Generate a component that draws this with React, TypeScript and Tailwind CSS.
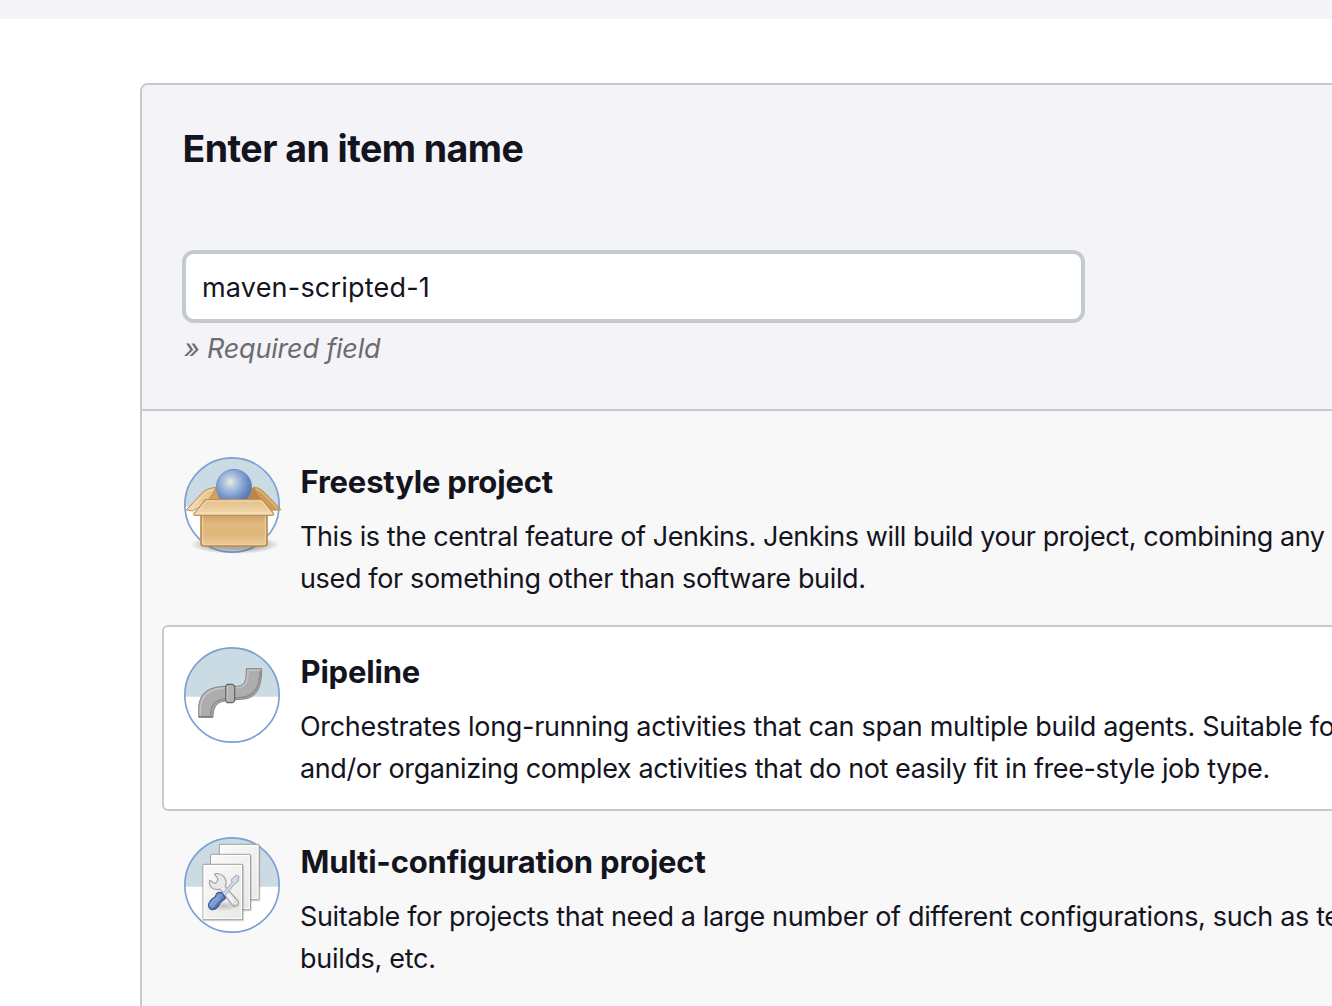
import type { ReactNode } from 'react';

function CircleBase({ children }: { children: ReactNode }) {
  return (
    <svg className="h-24 w-24 shrink-0 overflow-visible" viewBox="24 21 288 288" fill="none" aria-hidden="true">
      <circle cx="168" cy="165" r="141" fill="#fff" />
      <path d="M27 170V165a141 141 0 0 1 282 0v5z" fill="#cbdbe3" />
      <circle cx="168" cy="165" r="141.5" stroke="#7ba1d4" strokeWidth="5" />
      {children}
    </svg>
  );
}

function BoxIcon() {
  return (
    <CircleBase>
      <defs>
        <radialGradient id="ball" cx="0.4" cy="0.36" r="0.62">
          <stop offset="0" stopColor="#eceedd" />
          <stop offset="0.3" stopColor="#b0c4e0" />
          <stop offset="0.65" stopColor="#7c9cd0" />
          <stop offset="1" stopColor="#5577b4" />
        </radialGradient>
        <linearGradient id="front" x1="0" y1="0" x2="0" y2="1">
          <stop offset="0" stopColor="#cda367" />
          <stop offset="0.3" stopColor="#dfb97f" />
          <stop offset="0.6" stopColor="#ddb679" />
          <stop offset="1" stopColor="#ecca98" />
        </linearGradient>
        <linearGradient id="flap" x1="0" y1="0" x2="0" y2="1">
          <stop offset="0" stopColor="#e3bd85" />
          <stop offset="1" stopColor="#f2dab3" />
        </linearGradient>
        <radialGradient id="boxShade">
          <stop offset="0.5" stopColor="#555" stopOpacity="0.5" />
          <stop offset="1" stopColor="#555" stopOpacity="0" />
        </radialGradient>
      </defs>
      <ellipse cx="177" cy="284" rx="134" ry="28" fill="url(#boxShade)" />
      <path d="M112 114 238 113 262 152H88z" fill="#bb8747" />
      <path d="M116 118 126 120 128 149H92z" fill="#d2a25e" />
      <path d="M112 113 119 112 116 124 90 158 50 183 31 180 74 133Q86 117 112 113z" fill="url(#flap)" stroke="#bd9156" strokeWidth="3" strokeLinejoin="round" />
      <path d="M44 175 80 137Q92 122 112 118M86 153 60 174" stroke="#f8e6ca" strokeWidth="3" />
      <path d="M232 111Q252 112 266 128L315 179 289 181 258 153z" fill="#cf9c58" stroke="#bd9156" strokeWidth="3" strokeLinejoin="round" />
      <path d="M240 117Q254 121 262 131L304 175" stroke="#e0ba7f" strokeWidth="4" />
      <circle cx="174" cy="111" r="53" fill="url(#ball)" stroke="#6a8bc2" strokeWidth="2.5" />
      <path d="M75 194h198v86q0 8-8 8H83q-8 0-8-8z" fill="url(#front)" stroke="#b98c52" strokeWidth="5" />
      <path d="M80 200v79q0 4 4 4h180q4 0 4-4v-79" stroke="#efd3a6" strokeWidth="3" />
      <path d="M88 149H259L293 191Q295 196 288 196H58Q50 196 55 190z" fill="url(#flap)" stroke="#bf9154" strokeWidth="3.5" strokeLinejoin="round" />
      <path d="M91 153H256L286 189H61z" stroke="#f5e0be" strokeWidth="3" />
    </CircleBase>
  );
}

function PipeIcon() {
  return (
    <CircleBase>
      <path
        d="M68 232V209C68 163 92 140 148 139H176C204 139 211 131 211 86H257C257 150 238 177 194 178L147 183C122 186 111 201 111 232Z"
        fill="#adadad"
        stroke="#868686"
        strokeWidth="3"
      />
      <path d="M73 229V210C73 167 96 145 149 144H176C207 144 217 129 216 91H253" stroke="#c6c6c6" strokeWidth="4" />
      <path d="M253 93C251 146 232 172 194 173L148 177C116 180 105 194 104 226" stroke="#8e8e8e" strokeWidth="5" />
      <path d="M69 230h41" stroke="#808080" strokeWidth="5" />
      <path d="M154 133h16l6 6v43l-6 6h-16l-5-6v-43z" fill="#b2b2b2" stroke="#626262" strokeWidth="3.5" />
      <path d="M154 138v44" stroke="#c6c6c6" strokeWidth="3" />
    </CircleBase>
  );
}

function Sheet({ x, y }: { x: number; y: number }) {
  return (
    <g>
      <rect x={x + 1} y={y + 3} width="122" height="168" rx="2" fill="#666" opacity="0.25" />
      <rect x={x} y={y} width="119" height="166" rx="2" fill="url(#paper)" stroke="#8f908d" strokeWidth="3" />
      <rect x={x + 3} y={y + 3} width="113" height="160" stroke="#fff" strokeWidth="3" />
    </g>
  );
}

function SheetsIcon() {
  return (
    <CircleBase>
      <defs>
        <linearGradient id="paper" x1="0" y1="0" x2="1" y2="1">
          <stop offset="0" stopColor="#fafafa" />
          <stop offset="0.4" stopColor="#f3f3f2" />
          <stop offset="1" stopColor="#e8e8e7" />
        </linearGradient>
        <linearGradient id="handle" x1="0" y1="0" x2="1" y2="1">
          <stop offset="0" stopColor="#5579b7" />
          <stop offset="0.45" stopColor="#7f9fd4" />
          <stop offset="0.65" stopColor="#456cab" />
          <stop offset="1" stopColor="#31558f" />
        </linearGradient>
        <radialGradient id="toolShade">
          <stop offset="0" stopColor="#555" stopOpacity="0.3" />
          <stop offset="1" stopColor="#555" stopOpacity="0" />
        </radialGradient>
      </defs>
      <Sheet x={130} y={43} />
      <Sheet x={104} y={73} />
      <Sheet x={81} y={103} />
      <ellipse cx="141" cy="228" rx="55" ry="16" fill="url(#toolShade)" />
      <path
        d="M116 134 123 142Q129 150 120 158Q113 162 107 154L101 151C97 169 111 183 132 177L167 223C176 236 193 225 186 213L148 170C157 147 138 128 118 131Z"
        fill="#e8e9e8"
        stroke="#a0a2a0"
        strokeWidth="3.5"
        strokeLinejoin="round"
      />
      <path d="M138 174 176 220" stroke="#fafafa" strokeWidth="4" />
      <circle cx="177" cy="220" r="4" fill="#fff" stroke="#aaa" strokeWidth="2" />
      <path d="M139 191 168 158 165 149 180 136 189 139 186 155 174 164 146 198z" fill="#cfd7e3" stroke="#9facbf" strokeWidth="3" strokeLinejoin="round" />
      <path d="M172 153 182 142" stroke="#e0e6ef" strokeWidth="3" />
      <path
        d="M127 187 136 188 148 202Q149 207 139 212Q131 217 128 227Q119 240 107 239Q96 234 98 222Q104 207 118 200Q120 190 127 187Z"
        fill="url(#handle)"
        stroke="#36598f"
        strokeWidth="3.5"
      />
      <path d="M103 224Q109 210 125 202M112 230Q118 216 132 207" stroke="#9db9e2" strokeWidth="2.5" strokeLinecap="round" />
    </CircleBase>
  );
}

interface ItemProps {
  icon: ReactNode;
  title: string;
  children: ReactNode;
  selected?: boolean;
}

function Item({ icon, title, children, selected }: ItemProps) {
  return (
    <li
      className={
        selected
          ? 'flex h-[186px] rounded-md border-2 border-[#c4cbcf] bg-white p-5'
          : 'flex h-[186px] rounded-md border-2 border-transparent p-5'
      }
    >
      {icon}
      <div className="ml-5 whitespace-nowrap">
        <h2 className="mt-0.5 pl-[0.5px] text-[31px] leading-[46px] font-bold tracking-[-0.19px]">{title}</h2>
        <div className="mt-[11px] text-[27px] leading-[42px]">{children}</div>
      </div>
    </li>
  );
}

export default function App() {
  return (
    <div className="h-[1006px] overflow-hidden bg-white font-['Inter',sans-serif] text-[#14141f]">
      <div className="h-[19px] bg-[#f5f5f8]" />
      <main className="mt-16 ml-[140px] h-[1000px] w-[1300px] rounded-tl-lg border-2 border-[#c4cbcf] bg-[#f8f8f8]">
        <section className="h-[326px] rounded-tl-md border-b-2 border-[#c4cbcf] bg-[#f3f3f8] px-10 pt-10">
          <h1 className="pl-[0.5px] text-[37.5px] leading-[48px] font-bold tracking-[-0.55px]">Enter an item name</h1>
          <div className="mt-[77px] flex h-[73px] w-[903px] items-center rounded-xl border-4 border-[#c4cbcf] bg-white px-4 pt-[3px] text-[27px] tracking-[0.2px]">
            maven-scripted-1
          </div>
          <p className="mt-[5px] pl-0.5 text-[27px] leading-[42px] tracking-[-0.2px] text-[#6c6c6c] italic">» Required field</p>
        </section>
        <ul className="flex flex-col gap-1 pt-6 pl-5">
          <Item icon={<BoxIcon />} title="Freestyle project">
            <p className="tracking-[-0.42px]">
              This is the central feature of Jenkins. Jenkins will build your project, combining any
            </p>
            <p className="tracking-[-0.35px]">used for something other than software build.</p>
          </Item>
          <Item selected icon={<PipeIcon />} title="Pipeline">
            <p className="tracking-[-0.31px]">
              Orchestrates long-running activities that can span multiple build agents. Suitable for
            </p>
            <p className="tracking-[-0.4px]">
              and/or organizing complex activities that do not easily fit in free-style job type.
            </p>
          </Item>
          <Item icon={<SheetsIcon />} title="Multi-configuration project">
            <p className="tracking-[-0.35px]">
              Suitable for projects that need a large number of different configurations, such as te
            </p>
            <p className="tracking-[-0.3px]">builds, etc.</p>
          </Item>
        </ul>
      </main>
    </div>
  );
}
